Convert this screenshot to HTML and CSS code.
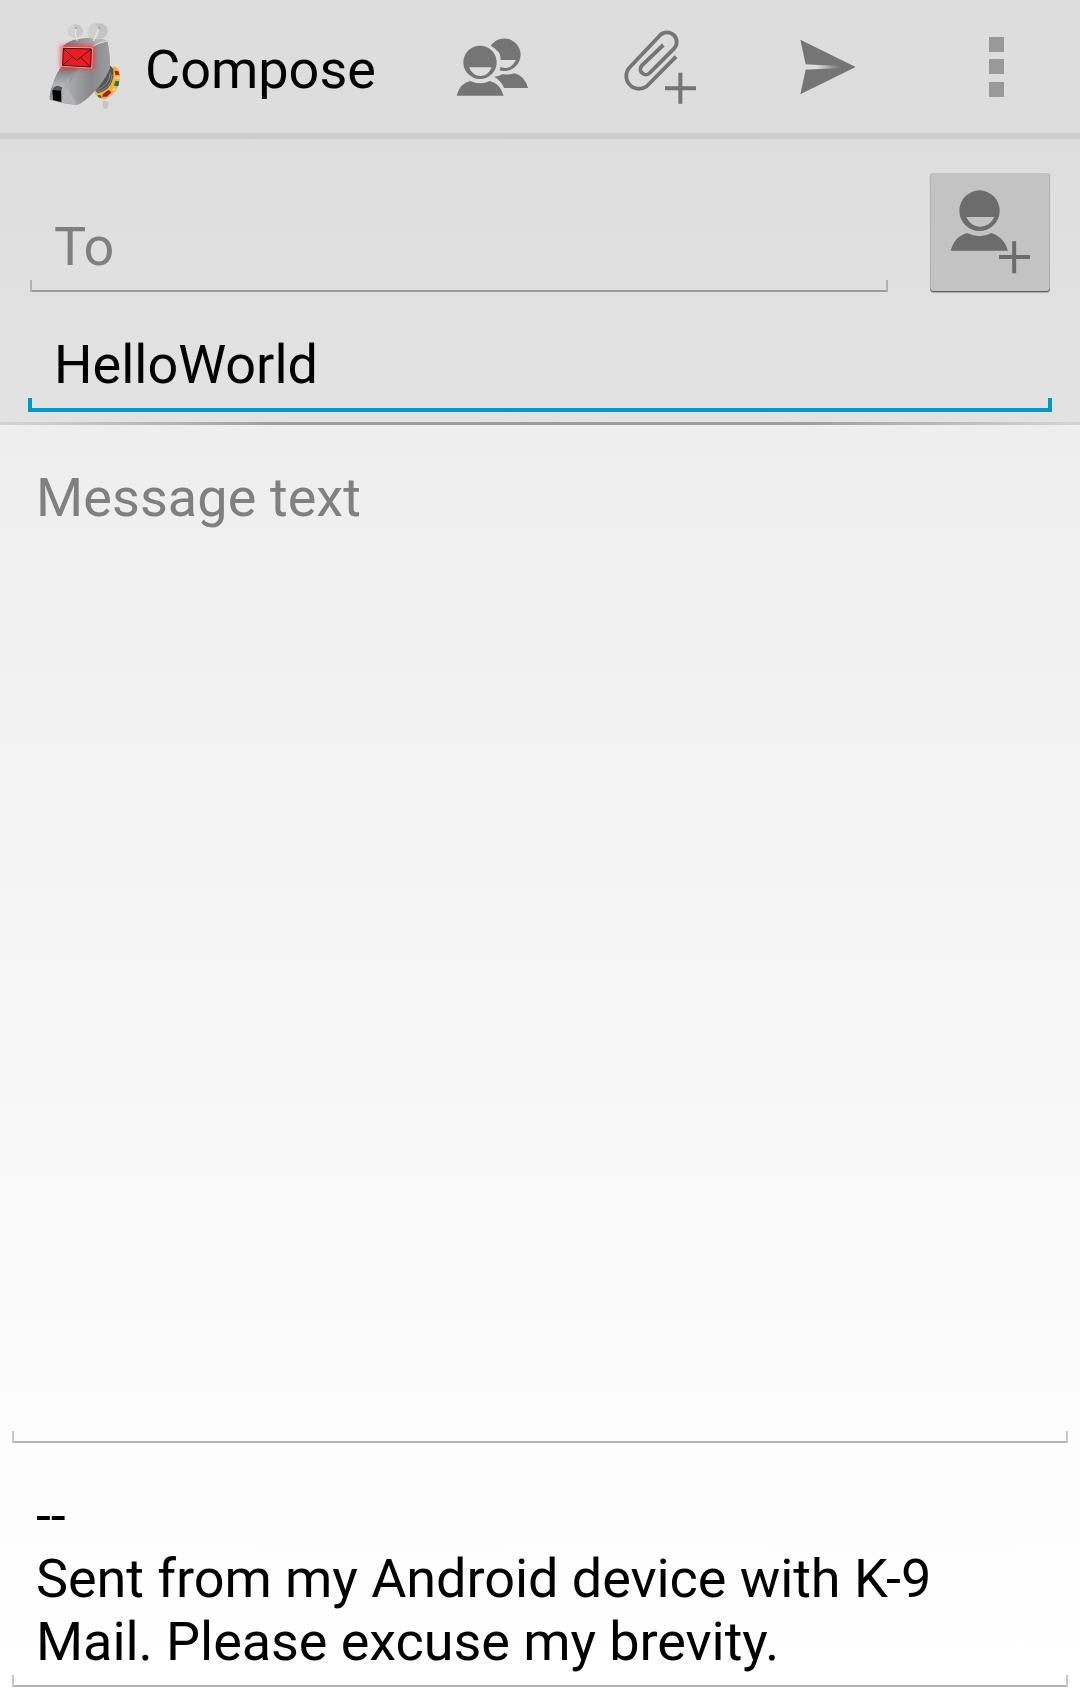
FILE: index.html
```html
<!DOCTYPE html>
<html lang="en">
<head>
<meta charset="utf-8">
<title>Compose</title>
<link rel="stylesheet" href="styles.css">
</head>
<body>
<header class="action-bar">
  <svg class="logo" viewBox="-90 -30 432 399" aria-hidden="true">
    <defs>
      <linearGradient id="snout" x1="0" y1="0" x2="1" y2="1">
        <stop offset="0" stop-color="#c9cacc"/><stop offset=".3" stop-color="#77787b"/><stop offset=".55" stop-color="#a5a6a9"/><stop offset="1" stop-color="#727376"/>
      </linearGradient>
      <linearGradient id="cheek" x1="0" y1="0" x2="1" y2="0">
        <stop offset="0" stop-color="#b4b5b8"/><stop offset=".6" stop-color="#88898c"/><stop offset="1" stop-color="#9c9da0"/>
      </linearGradient>
      <linearGradient id="bridge" x1="0" y1="0" x2="0" y2="1">
        <stop offset="0" stop-color="#77787b"/><stop offset="1" stop-color="#c6c7c9"/>
      </linearGradient>
      <linearGradient id="brow" x1="0" y1="0" x2="1" y2="0">
        <stop offset="0" stop-color="#747578"/><stop offset="1" stop-color="#c2c3c5"/>
      </linearGradient>
      <filter id="glow" x="-30%" y="-30%" width="160%" height="160%"><feGaussianBlur stdDeviation="6"/></filter>
    </defs>
    <path d="M218 270L236 275L234 292L227 299L218 290Z" fill="#c6c6c7"/>
    <path d="M193 247Q237 238 250 169Q268 171 270 192Q271 248 224 268Q204 269 193 247Z" fill="#f2b33d"/>
    <path d="M254 182L265 184L268 195L256 194ZM235 240L245 246L230 260L216 260L219 252Z" fill="#a11f24"/>
    <path d="M256 213L268 214L265 229L252 227ZM203 256L211 255L216 264L205 262Z" fill="#26734a"/>
    <path d="M256 202L269 202L268 207L256 207ZM251 235L257 237L251 243L246 240Z" fill="#f4dca0"/>
    <path d="M239 165L250 177Q255 237 204 250L191 238Z" fill="#55565a"/>
    <path d="M241 188Q239 226 199 241M246 194Q245 235 203 246" fill="none" stroke="#a5a6a8" stroke-width="2"/>
    <path d="M99 110Q111 92 150 87Q204 79 232 93Q242 142 239 176Q219 219 192 245Q162 277 142 284Q100 283 59 269Q57 249 70 220Q77 192 98 165Z" fill="url(#snout)"/>
    <path d="M187 110Q204 98 232 93Q242 142 239 176Q219 219 192 245Q162 277 142 284L95 277L110 237L150 173L185 171Z" fill="url(#cheek)"/>
    <path d="M99 110Q111 92 150 87Q204 79 232 93Q204 98 187 112Z" fill="url(#brow)"/>
    <path d="M92 178L145 173Q115 198 99 236L67 240Q70 207 92 178Z" fill="url(#bridge)"/>
    <path d="M120 195L113 237L142 284L101 279L96 239Z" fill="#b9babc" opacity=".6"/>
    <path d="M187 110Q204 98 232 93" fill="none" stroke="#dededf" stroke-width="3"/>
    <path d="M67 240L93 238L94 276L69 270Z" fill="#050505"/>
    <path d="M67 240Q70 228 83 227L97 232L94 242Z" fill="#57585a"/>
    <rect x="91" y="106" width="103" height="72" fill="#ff2b30" opacity=".75" filter="url(#glow)"/>
    <path d="M97 112L187 114L185 174L95 168Z" fill="#ed1c24" stroke="#ffaaa7" stroke-width="3"/>
    <path d="M100 115L184 117L182 171L98 166ZM100 116L140 151L183 118M99 165L128 140M181 170L153 143" fill="none" stroke="#43171a" stroke-width="3"/>
    <ellipse cx="136" cy="63" rx="23" ry="20" fill="#c9c9c9"/>
    <ellipse cx="128" cy="61" rx="13" ry="17" fill="#d2d2d2"/>
    <path d="M190 41Q206 37 221 43Q235 51 233 66Q229 83 213 86Q199 90 187 88Q173 83 173 65Q176 45 190 41Z" fill="#c4c4c5"/>
    <ellipse cx="191" cy="64" rx="17" ry="22" fill="#d0d0d0"/>
    <path d="M137 53Q134 73 142 92M208 53L191 93" fill="none" stroke="#e6e6e6" stroke-width="3.500"/>
    <circle cx="138" cy="54" r="4" fill="#aaa"/><circle cx="208" cy="54" r="4" fill="#aaa"/>
  </svg>
  <h1 class="title">Compose</h1>
  <nav class="actions">
    <svg class="action" viewBox="-96 -60 504 399" role="img" aria-label="Add Cc/Bcc">
      <path fill="#757575" fill-rule="evenodd" d="M152 77A49 49 0 1 1 178 151Q181 146 182 141Q210 153 228 120L182 120Q182 101 172 93Q164 83 152 77Z"/>
      <path fill="#757575" d="M163 170Q178 168 188 162Q205 166 224 160Q254 168 264 204L192 204Q185 184 163 170Z"/>
      <path fill="#757575" fill-rule="evenodd" d="M70 127A50 50 0 1 1 170 127A50 50 0 1 1 70 127ZM87 142Q98 168 121 168Q145 168 155 142Z"/>
      <path fill="#757575" d="M50 227Q59 190 91 183Q120 197 150 183Q181 191 191 227Z"/>
    </svg>
    <svg class="action" viewBox="-102 -60 504 399" role="img" aria-label="Add attachment">
      <path fill="none" stroke="#757575" stroke-width="11.5" d="M198 110L114 195A38 38 0 0 1 60 141L151 45A29 29 0 0 1 192 86L119 159A16 16 0 0 1 96 136L160 75"/>
      <path fill="none" stroke="#757575" stroke-width="12" d="M211 158V251M165 204.500H258"/>
    </svg>
    <svg class="action" viewBox="-108 -60 504 399" role="img" aria-label="Send">
      <defs><linearGradient id="slit"><stop offset="0" stop-color="#ddd"/><stop offset=".35" stop-color="#ddd"/><stop offset="1" stop-color="#757575"/></linearGradient></defs>
      <path fill="#757575" d="M61 59L227 141L61 223L77 149V133Z"/>
      <path fill="url(#slit)" d="M74 133L180 138V144L74 149Z"/>
    </svg>
    <svg class="action" viewBox="396 -60 504 399" role="img" aria-label="More options">
      <path fill="#999" d="M627 51h45v45h-45zM627 117h45v45h-45zM627 186h45v45h-45z"/>
    </svg>
  </nav>
</header>
<main class="compose">
  <section class="headers">
    <div class="recipient">
      <div class="field field-to hint">To</div>
      <button class="add-contact" type="button" aria-label="Add contact">
        <svg class="contact-icon" viewBox="150 70 360 357" aria-hidden="true">
          <path fill="#6c6c6c" fill-rule="evenodd" d="M238 183A60.500 61 0 1 1 359 183A60.500 61 0 1 1 238 183ZM259 202Q272 231 300 231Q330 231 343 202Z"/>
          <path fill="#6c6c6c" d="M212 303Q224 259 262 250Q298 269 335 250Q372 261 384 303Z"/>
          <path fill="none" stroke="#6c6c6c" stroke-width="12" d="M402.500 275V371M357 322H450"/>
        </svg>
      </button>
    </div>
    <div class="field field-subject">HelloWorld</div>
  </section>
  <div class="divider"></div>
  <section class="body">
    <div class="field field-message hint">Message text</div>
    <div class="field field-signature">--<br>Sent from my Android device with K-9 Mail. Please excuse my brevity.</div>
  </section>
</main>
</body>
</html>
```
FILE: styles.css
```css
* { box-sizing: border-box; }

body {
  margin: 0;
  height: 1699px;
  display: flex;
  flex-direction: column;
  overflow: hidden;
  background: #fff;
  color: #000;
  font: 54px/63px Roboto, sans-serif;
}

.action-bar {
  flex: none;
  display: flex;
  height: 139px;
  background: #ddd;
  border-bottom: 6px solid #ccc;
}

.logo { flex: none; width: 144px; height: 133px; }

.title {
  flex: 1;
  margin: 0;
  padding: 38px 0 0 1px;
  font-size: 54px;
  font-weight: 400;
}

.actions { display: flex; }
.action { width: 168px; height: 133px; }

.compose {
  flex: 1;
  display: flex;
  flex-direction: column;
}

.headers {
  height: 283px;
  padding: 34px 28px 0;
  background: linear-gradient(#ddd, #e0e0e0 40%, #e2e2e2);
}

.recipient {
  display: flex;
  justify-content: space-between;
  padding: 0 2px;
}

/* Bracket-shaped underline: two side ticks and a bottom rule */
.field {
  --line: #b2b2b2;
  --tick: #c8c8c8;
  --w: 2px;
  --h: 12px;
  background:
    linear-gradient(var(--tick), var(--tick)) left bottom / var(--w) var(--h) no-repeat,
    linear-gradient(var(--tick), var(--tick)) right bottom / var(--w) var(--h) no-repeat,
    linear-gradient(var(--line), var(--line)) left bottom / 100% var(--w) no-repeat;
}

.hint { color: #808080; }

.field-to {
  --line: #9b9b9b;
  --tick: #b1b1b1;
  width: 858px;
  height: 119px;
  padding: 42px 24px 0;
}

.add-contact {
  width: 120px;
  height: 119px;
  padding: 0;
  border: 0;
  border-radius: 4px;
  background: #c3c3c3;
  box-shadow: inset 0 -1px #5f5f5f, inset 1px 0 #b2b2b2, inset -1px 0 #b2b2b2, 0 1px 1px #aaa;
}

.contact-icon { display: block; width: 120px; height: 119px; }

.field-subject {
  --line: #0099cc;
  --tick: #0099cc;
  --w: 4px;
  --h: 14px;
  height: 120px;
  padding: 41px 26px 0;
}

.divider {
  height: 3px;
  background: linear-gradient(90deg, #d5d5d5, #a0a0a0 25%, #9c9c9c 50%, #a0a0a0 75%, #d5d5d5);
}

.body {
  flex: 1;
  padding: 0 12px;
  background: linear-gradient(#eee, #fdfdfd 85%, #fff);
}

.field-message {
  height: 1018px;
  padding: 41px 24px 0;
  letter-spacing: 0.08px;
}

.field-signature {
  height: 244px;
  padding: 41px 24px 0;
  letter-spacing: -0.06px;
}
```
